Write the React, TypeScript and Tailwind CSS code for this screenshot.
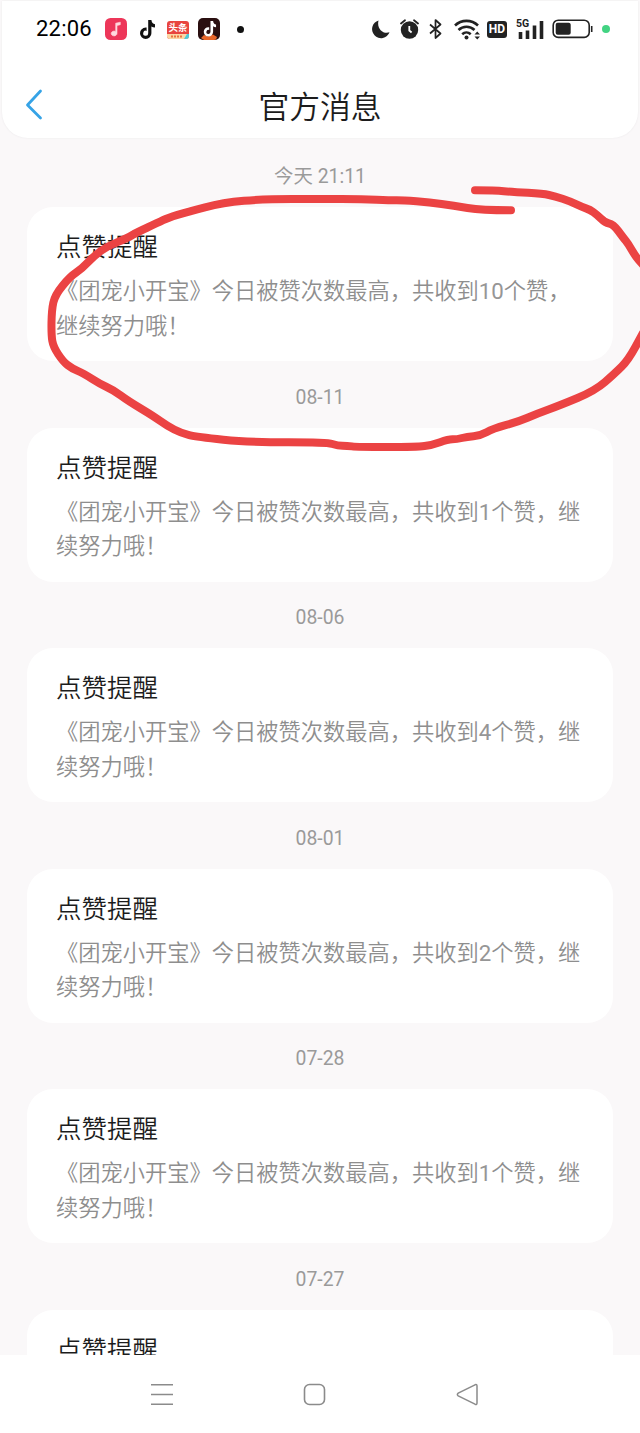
interface Message {
  date: string
  likes?: number
}

type Point = [number, number]

const messages: Message[] = [
  { date: "今天 21:11", likes: 10 },
  { date: "08-11", likes: 1 },
  { date: "08-06", likes: 4 },
  { date: "08-01", likes: 2 },
  { date: "07-28", likes: 1 },
  { date: "07-27" },
]

const loop: Point[] = [
  [511, 210.3], [482, 210.3], [453, 205.7], [430, 202.3], [403, 200.3], [390, 200.3], [363, 199], [320, 199],
  [265, 199], [223, 202.7], [187, 212], [168, 217.7], [158, 222.7], [137, 232.3], [127, 238.3], [108, 246],
  [95, 255], [82, 268.7], [70, 276.7], [55, 295], [51.7, 310], [51.3, 335], [53.3, 346.7], [63, 361.5],
  [72, 368.5], [83.3, 373.3], [100, 384], [113.3, 390], [128.3, 401], [153.3, 416], [166.7, 425.7], [181.7, 433.3],
  [196.7, 437], [250, 442.3], [326.7, 442.3], [338, 445.7], [347, 445.7], [357, 447], [417, 447], [432, 445],
  [448, 439.3], [457, 439.3], [467, 436.7], [480, 435.7], [493, 428.7], [518, 421.7], [537, 413.7], [560, 405.3],
  [595, 390.7], [615, 373.3], [628.3, 360], [643, 333],
]

const tail: Point[] = [
  [475, 190.3], [495, 190.3], [513, 192], [543, 193.7], [555, 196.3], [570, 201.3], [582, 207], [590, 209.7],
  [597, 214.7], [605, 222.7], [613.3, 224.3], [623.3, 237.7], [628.3, 244], [635, 255.7], [643, 265],
]

// quadratic curve through the midpoints of the hand drawn points
function smooth(points: Point[]) {
  let d = `M${points[0][0]} ${points[0][1]}`
  for (let i = 1; i < points.length - 1; i++) {
    const [x, y] = points[i]
    const [nx, ny] = points[i + 1]
    d += ` Q${x} ${y} ${(x + nx) / 2} ${(y + ny) / 2}`
  }
  const last = points[points.length - 1]
  return `${d} L${last[0]} ${last[1]}`
}

const NOTE = "M11.2 1h3.2c.3 2.600 1.600 4 3.600 4.300v3.300c-1.400 0-2.600-.4-3.600-1.100v6.700a5.700 5.700 0 1 1-5.700-5.700l.9.1v3.300a2.500 2.500 0 1 0 1.600 2.300z"

/* ─── STATUS BAR ─── */
function StatusBar() {
  return (
    <div className="flex h-[56px] items-center pl-[34px] pr-[28px] text-[#222]">
      <span className="w-[69px] font-[Roboto] text-[22px] leading-none tracking-[0.2px] text-black">22:06</span>

      <svg className="size-[22px]" viewBox="0 0 22 22">
        <rect width="22" height="22" rx="5.500" fill="#ed3659" />
        <path d="M10.700 5.200 15.300 4.200v2.500l-3.300.8v8a2.900 2.400 0 1 1-1.300-2z" fill="#ffd9de" stroke="#ffd9de" strokeWidth=".6" />
      </svg>
      <svg className="ml-[10px] size-[20px]" viewBox="0 0 20 20">
        <path d={NOTE} fill="#111" />
      </svg>
      <div className="mt-[2px] ml-[10px] flex h-[18px] w-[22px] flex-col overflow-hidden rounded-[3px] bg-[#e8453f] text-center font-['Noto_Sans_CJK_SC',sans-serif] font-bold text-white">
        <span className="h-[12px] text-[9.500px] leading-[12px]">头条</span>
        <svg className="h-[6px] w-[22px]" viewBox="0 0 22 6">
          <path d="M0 1h22v5H0z" fill="#fbd6a4" />
          <path d="M4 3.500h11" stroke="#e8733f" strokeWidth="2.200" strokeDasharray="2 1" />
          <path d="M17 6l3-5h2v5z" fill="#4cc8d8" />
        </svg>
      </div>
      <svg className="ml-[9px] size-[22px]" viewBox="0 0 22 22">
        <rect width="22" height="22" rx="5" fill="#2a0f10" />
        <path d="M3 20l3-3 4 1.500 5-2 4 2.500-1 2.500a5 5 0 0 1-2 .5H6z" fill="#e8662a" />
        <g transform="translate(3.300 2.200) scale(.82)">
          <path d={NOTE} fill="#fff" />
        </g>
      </svg>
      <span className="ml-[17px] size-[7px] rounded-full bg-[#111]" />

      <svg className="ml-auto size-[19px]" viewBox="0 0 19 19">
        <path d="M7.500.5A9 9 0 1 0 18.500 12.300C12 14.500 5.500 8.500 7.500.5z" fill="currentColor" />
      </svg>
      <svg className="ml-[10px] h-[20px] w-[19px]" viewBox="0 0 19 20">
        <circle cx="9.500" cy="11" r="8.700" fill="currentColor" />
        <path d="M1 4.500 5 1.200M18 4.500 14 1.200" stroke="currentColor" strokeWidth="1.800" strokeLinecap="round" />
        <path d="M9.300 7v4.500l2.300 2" fill="none" stroke="#fff" strokeWidth="1.800" />
      </svg>
      <svg className="ml-[10px] h-[20px] w-[13px]" viewBox="0 0 13 20">
        <path d="M1 5.500 11.500 14.500 6.500 19V1l5 4.500L1 14.500" fill="none" stroke="currentColor" strokeWidth="1.700" strokeLinejoin="round" />
      </svg>
      <svg className="ml-[12px] h-[21px] w-[27px]" viewBox="0 0 27 21">
        <g fill="none" stroke="currentColor" strokeWidth="2.600">
          <path d="M1 6.500a16.500 16.500 0 0 1 23 0" />
          <path d="M4.500 11a11.500 11.500 0 0 1 16 0" />
          <path d="M8.200 15.200a6.300 6.300 0 0 1 8.500 0" />
        </g>
        <circle cx="12.500" cy="18.500" r="2" fill="currentColor" />
        <path d="M20.500 15.500h5.500l-2.750-3zM20.500 17.500h5.500l-2.750 3z" fill="currentColor" />
      </svg>
      <span className="ml-[6px] h-[17px] w-[20px] rounded-[3px] bg-[#222] text-center font-[Roboto] text-[12px] leading-[17px] font-bold text-white">HD</span>
      <div className="relative ml-[9px] h-[21px] w-[28px]">
        <span className="absolute -top-px left-0 font-[Roboto] text-[10.500px] leading-[11px] font-bold">5G</span>
        <svg className="h-[21px] w-[28px]" viewBox="0 0 28 21">
          <path d="M4.500 13v7M11.500 11.500v8.500M18.500 6.500v13.500M25.500 2v18" stroke="currentColor" strokeWidth="3.600" />
        </svg>
      </div>
      <svg className="ml-[8px] h-[20px] w-[41px]" viewBox="0 0 41 20">
        <rect x="1.200" y="1.200" width="36" height="17.200" rx="5" fill="none" stroke="currentColor" strokeWidth="1.600" />
        <rect x="3.700" y="3.800" width="15" height="12" rx="2" fill="currentColor" />
        <path d="M39.700 7v6" stroke="currentColor" strokeWidth="1.600" />
      </svg>
      <span className="ml-[9px] size-[8px] rounded-full bg-[#42d382]" />
    </div>
  )
}

function MessageCard({ date, likes }: Message) {
  return (
    <>
      <p className="h-[66.500px] shrink-0 pt-[21.500px] text-center text-[19.400px] leading-[30px] text-[#9a9a9a]">{date}</p>
      <article className="h-[154px] shrink-0 rounded-[26px] bg-white pr-[29px] pl-[29px] pt-[22px]">
        <h2 className="text-[25.500px] leading-[37px] font-[350] text-[#1c1c1c]">点赞提醒</h2>
        {likes && (
          <p className="mt-[8px] text-[22.250px] leading-[34.500px] font-[350] text-[#8e8e8e]">
            《团宠小开宝》今日被赞次数最高，共收到<span className="font-normal text-[#969696]">{likes}</span>个赞，继续努力哦！
          </p>
        )}
      </article>
    </>
  )
}

export default function App() {
  return (
    <main className="relative flex h-[1433px] w-[640px] flex-col overflow-hidden bg-[#faf8f9] font-[Roboto,'Noto_Sans_CJK_SC',sans-serif] [text-autospace:no-autospace] [text-spacing-trim:space-all]">
      <header className="mx-[2px] mt-px h-[137px] shrink-0 rounded-b-[26px] bg-white shadow-[0_0_2px_#e9e7e9]">
        <StatusBar />
        <div className="grid h-[94px] grid-cols-[70px_1fr_70px] items-center">
          <svg className="ml-[23px] h-[32px] w-[18px]" viewBox="0 0 18 32">
            <path d="M15.500 3 2.500 17 15.500 30" fill="none" stroke="#36a3e6" strokeWidth="2.800" strokeLinecap="round" strokeLinejoin="round" />
          </svg>
          <h1 className="pt-[8px] text-center text-[30.800px] leading-none font-[350] text-[#1c1c1c]">官方消息</h1>
        </div>
      </header>

      <section className="mt-[2.500px] flex h-[1214px] shrink-0 flex-col overflow-hidden px-[27px]">
        {messages.map((message) => (
          <MessageCard key={message.date} {...message} />
        ))}
      </section>

      <nav className="flex flex-1 justify-between bg-white pt-[28px] pr-[161px] pl-[150px]">
        <svg className="size-[23px]" viewBox="0 0 23 23" fill="none" stroke="#8b8b8b" strokeWidth="1.600">
          <path d="M1 1.800h22M1 11.500h22M1 21.200h22" />
        </svg>
        <svg className="size-[23px]" viewBox="0 0 23 23" fill="none" stroke="#8b8b8b" strokeWidth="1.600">
          <rect x="1.500" y="1.500" width="20" height="20" rx="5" />
        </svg>
        <svg className="size-[23px]" viewBox="0 0 23 23" fill="none" stroke="#8b8b8b" strokeWidth="1.500" strokeLinejoin="round">
          <path d="M19 1.800 2.200 10.200Q0.500 11.500 2.200 12.800L19 21.200Q21 22 21 20V3Q21 1 19 1.800z" />
        </svg>
      </nav>

      {/* Marker scribble over the first card */}
      <svg className="pointer-events-none absolute inset-0 h-full w-full" viewBox="0 0 640 1433" fill="none" stroke="#eb4343" strokeWidth="8" strokeLinecap="round" strokeLinejoin="round">
        <path d={smooth(loop)} />
        <path d={smooth(tail)} />
      </svg>
    </main>
  )
}
